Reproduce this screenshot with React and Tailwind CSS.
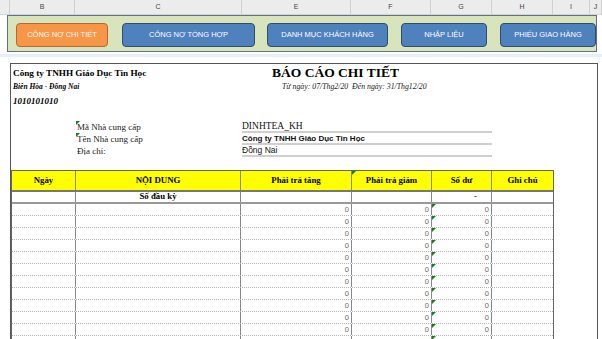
import React from 'react';

const cols = [
  { l: '', w: 'w-[10px]' },
  { l: 'B', w: 'w-[65px]' },
  { l: 'C', w: 'w-[167px]' },
  { l: 'E', w: 'w-[109px]' },
  { l: 'F', w: 'w-[80px]' },
  { l: 'G', w: 'w-[61px]' },
  { l: 'H', w: 'w-[61px]' },
  { l: 'I', w: 'w-[37px]' },
  { l: 'J', w: 'w-[12px]' },
];

const navButtons = [
  { label: 'CÔNG NỢ CHI TIẾT', w: 'w-[92px]', orange: true, ml: 'ml-[8px]' },
  { label: 'CÔNG NỢ TỔNG HỢP', w: 'w-[133px]', ml: 'ml-[14px]' },
  { label: 'DANH MỤC KHÁCH HÀNG', w: 'w-[121px]', ml: 'ml-[12px]' },
  { label: 'NHẬP LIỆU', w: 'w-[86px]', ml: 'ml-[13px]' },
  { label: 'PHIẾU GIAO HÀNG', w: 'w-[96px]', ml: 'ml-[13px]' },
];

function Flag() {
  return (
    <span className="absolute left-0 top-0 w-0 h-0 border-t-[4px] border-t-[#1f7a1f] border-r-[4px] border-r-transparent" />
  );
}

// 11 full rows, the 12th only peeks in at the bottom edge
const rows = Array.from({ length: 12 }, (_, i) => i < 11);

export default function App() {
  return (
    <div className="w-[602px] h-[339px] overflow-hidden bg-white relative" style={{ fontFamily: '"Liberation Serif", serif' }}>
      {/* column letters */}
      <div className="flex h-[15px] bg-[#ececec] border-b border-[#d4d4d4]">
        {cols.map((c, i) => (
          <div
            key={i}
            className={`${c.w} shrink-0 flex items-center justify-center text-[7px] text-[#444] border-r border-[#d0d0d0]`}
            style={{ fontFamily: '"Liberation Sans", sans-serif' }}
          >
            {c.l}
          </div>
        ))}
      </div>

      {/* nav band */}
      <div className="ml-[7px] w-[590px] h-[37px] bg-[#d8e4bc] border border-[#5f7184] flex items-start pt-[7px]">
        {navButtons.map((b) => (
          <div
            key={b.label}
            className={`${b.w} ${b.ml} h-[24px] shrink-0 rounded-[4px] border flex items-center justify-center text-[7.5px] text-white ${
              b.orange ? 'bg-[#f79646] border-[#b5692e]' : 'bg-[#4f81bd] border-[#2f4d70]'
            }`}
            style={{ fontFamily: '"Liberation Sans", sans-serif' }}
          >
            {b.label}
          </div>
        ))}
      </div>

      <div className="h-[3px] mt-[2px] bg-[#e7eff8]" />

      {/* report page */}
      <div className="mt-[6px] ml-[10px] w-[588px] h-[300px] border-l border-t border-r border-[#555] pt-[2px]">
        <div className="flex">
          <div className="w-[250px] pl-[2px]">
            <div className="h-[14px] leading-[14px] text-[9.2px] font-bold text-black">Công ty TNHH Giáo Dục Tin Học</div>
            <div className="h-[14px] leading-[14px] text-[7.5px] font-bold italic text-black">Biên Hòa - Đồng Nai</div>
            <div className="h-[14px] leading-[14px] text-[9px] font-bold italic text-black">1010101010</div>
          </div>
          <div className="flex flex-col">
            <div className="h-[14px] leading-[14px] pl-[11px] text-[13.5px] font-bold text-black">BÁO CÁO CHI TIẾT</div>
            <div className="h-[14px] leading-[14px] pl-[21px] text-[7.8px] italic text-[#222]">
              Từ ngày: 07/Thg2/20&nbsp; Đến ngày: 31/Thg12/20
            </div>
          </div>
        </div>

        {/* supplier info */}
        <div className="mt-[13px] flex flex-col">
          {[
            { k: 'Mã Nhà cung cấp', v: 'DINHTEA_KH', serif: true, flag: true },
            { k: 'Tên Nhà cung cấp', v: 'Công ty TNHH Giáo Dục Tin Học', bold: true, flag: true },
            { k: 'Địa chỉ:', v: 'Đồng Nai' },
          ].map((r) => (
            <div key={r.k} className="flex h-[12px]">
              <div className="relative w-[231px] pl-[66px] text-[9px] leading-[12px] text-[#222]">
                {r.flag && <span className="absolute left-[65px] top-0 w-0 h-0 border-t-[4px] border-t-[#1f7a1f] border-r-[4px] border-r-transparent" />}
                {r.k}
              </div>
              <div
                className={`w-[250px] border-b-2 border-[#cfcfcf] leading-[11px] text-[#111] ${
                  r.bold ? 'font-bold text-[8px]' : r.serif ? 'text-[9.5px]' : 'text-[8.5px]'
                }`}
                style={{ fontFamily: r.serif ? '"Liberation Serif", serif' : '"Liberation Sans", sans-serif' }}
              >
                {r.v}
              </div>
            </div>
          ))}
        </div>

        {/* table */}
        <div className="mt-[13px] w-[543px] border border-[#666] border-b-0">
          <div className="flex h-[21px] bg-[#ffff00] border-b-2 border-[#777] text-[8.8px] font-bold text-black">
            <div className="w-[64px] flex items-center justify-center border-r border-[#888]">Ngày</div>
            <div className="w-[165px] flex items-center justify-center border-r border-[#888]">NỘI DUNG</div>
            <div className="w-[111px] flex items-center justify-center border-r border-[#888]">Phải trả tăng</div>
            <div className="relative w-[80px] flex items-center justify-center border-r border-[#888]">
              <Flag />
              Phải trả giảm
            </div>
            <div className="w-[60px] flex items-center justify-center border-r border-[#888]">Số dư</div>
            <div className="w-[61px] flex items-center justify-center">Ghi chú</div>
          </div>

          <div className="flex h-[12px] border-b-2 border-[#999] text-[8.8px] font-bold text-black">
            <div className="w-[64px] border-r border-[#888]" />
            <div className="w-[165px] flex items-center justify-center border-r border-[#888]">Số đầu kỳ</div>
            <div className="w-[111px] border-r border-[#888]" />
            <div className="w-[80px] border-r border-[#888]" />
            <div className="w-[60px] flex items-center justify-end pr-[14px] border-r border-[#888] font-normal">-</div>
            <div className="w-[61px]" />
          </div>

          {rows.map((full, i) => (
            <div
              key={i}
              className="flex h-[12px] border-b border-dotted border-[#b4b4b4] text-[7.5px] text-[#666]"
              style={{ fontFamily: '"Liberation Sans", sans-serif' }}
            >
              <div className="w-[64px] border-r border-[#888]" />
              <div className="w-[165px] border-r border-[#888]" />
              <div className="w-[111px] flex items-center justify-end pr-[2px] border-r border-[#888]">{full ? '0' : ''}</div>
              <div className="w-[80px] flex items-center justify-end pr-[2px] border-r border-[#888]">{full ? '0' : ''}</div>
              <div className="relative w-[60px] flex items-center justify-end pr-[2px] border-r border-[#888]">
                <Flag />
                {full ? '0' : ''}
              </div>
              <div className="w-[61px]" />
            </div>
          ))}
        </div>
      </div>
    </div>
  );
}
